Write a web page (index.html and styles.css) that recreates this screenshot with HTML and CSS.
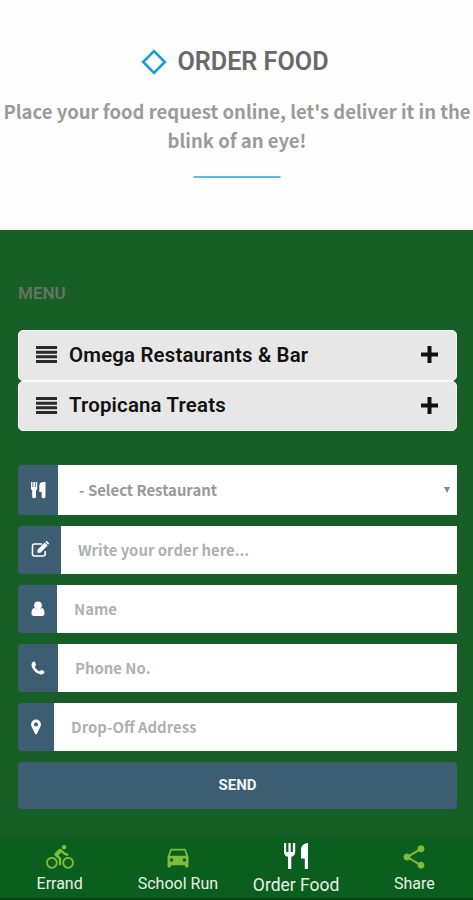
FILE: index.html
```html
<!DOCTYPE html>
<html lang="en">
<head>
    <meta charset="UTF-8">
    <meta name="viewport" content="width=device-width, initial-scale=1">
    <title>Order Food</title>
    <link rel="stylesheet" href="styles.css">
</head>
<body>
    <!-- Page heading -->
    <header class="intro">
        <h1>
            <svg class="diamond" viewBox="0 0 24 24"><path d="M12 2l10 10-10 10L2 12z"/></svg>
            <span>ORDER FOOD</span>
        </h1>
        <p><span class="line">Place your food request online, let's deliver it in the</span> <span class="line">blink of an eye!</span></p>
        <div class="divider"></div>
    </header>

    <main class="order">
        <h2>MENU</h2>

        <!-- Restaurant menus -->
        <div class="accordion">
            <div class="panel">
                <svg class="bars" viewBox="0 0 21 17"><path d="M0 1.5h21M0 6.2h21M0 10.8h21M0 15.5h21"/></svg>
                <span>Omega Restaurants &amp; Bar</span>
                <svg class="plus" viewBox="0 0 17 17"><path d="M8.5 0v17M0 8.5h17"/></svg>
            </div>
            <div class="panel">
                <svg class="bars" viewBox="0 0 21 17"><path d="M0 1.5h21M0 6.2h21M0 10.8h21M0 15.5h21"/></svg>
                <span>Tropicana Treats</span>
                <svg class="plus" viewBox="0 0 17 17"><path d="M8.5 0v17M0 8.5h17"/></svg>
            </div>
        </div>

        <!-- Order form -->
        <form id="order-form">
            <div class="field field-select">
                <span class="addon"><svg viewBox="0 0 15 18"><path d="M0 1h1.500v5h.8V1h1.600v5h.8V1h1.500v6.200q0 1.600-1.200 2.300v6.300q0 1.500-1.900 1.500t-1.900-1.500V9.500Q0 8.800 0 7.200zM14.500 1v14.800q0 1.500-1.900 1.500t-1.900-1.500V11H8.300V5q0-4 4-4z"/></svg></span>
                <select name="restaurant">
                    <option>- Select Restaurant</option>
                    <option>Omega Restaurants &amp; Bar</option>
                    <option>Tropicana Treats</option>
                </select>
                <span class="arrow"></span>
            </div>
            <div class="field field-order">
                <span class="addon"><svg viewBox="0 0 18 18"><path class="outline" d="M14.200 10v3q0 2-2 2H3.500q-2 0-2-2V5q0-2 2-2H11"/><path d="M6.500 8.800l7.200-7.200 3 3-7.200 7.200h-3zM14.400.9l.6-.6q.6-.5 1.200 0l1.600 1.600q.5.600 0 1.200l-.6.600z"/></svg></span>
                <input type="text" name="order" placeholder="Write your order here...">
            </div>
            <div class="field field-name">
                <span class="addon"><svg viewBox="0 0 14 16"><circle cx="7" cy="4.300" r="3.900"/><path d="M3.100 6.900Q5 8.300 7 8.300t3.900-1.400Q13.500 7.500 13.500 12.300 13.500 15 11 15H3Q.5 15 .5 12.300.5 7.500 3.100 6.900z"/></svg></span>
                <input type="text" name="name" placeholder="Name">
            </div>
            <div class="field field-phone">
                <span class="addon"><svg viewBox="0 0 14 14"><path d="M13.500 10.400q0 1.200-.7 2.100-1.200 1.200-3.100 1Q6.400 13 3.600 10.200.8 7.500.5 4.200.300 2.300 1.700 1q.9-.6 1.900-.5l1.500 3.100q.1.500-.5 1L3.700 5.600q.7 1.800 2 3t2.900 1.800l1.200-1.200q.4-.4.900-.2z"/></svg></span>
                <input type="text" name="phone" placeholder="Phone No.">
            </div>
            <div class="field field-address">
                <span class="addon"><svg viewBox="0 0 10 15"><path fill-rule="evenodd" d="M5 .5a4.600 4.600 0 0 1 4.600 4.600q0 1-.5 2.200l-3.200 6.500q-.9 1.300-1.800 0L.9 7.300Q.4 6.200.4 5.100A4.600 4.600 0 0 1 5 .5zm0 2.700a1.900 1.900 0 1 0 0 3.800 1.900 1.900 0 0 0 0-3.800z"/></svg></span>
                <input type="text" name="address" placeholder="Drop-Off Address">
            </div>
            <button type="submit">SEND</button>
        </form>
    </main>

    <!-- Bottom navigation -->
    <nav class="tabs">
        <a class="tab">
            <svg viewBox="0 0 24 24"><path d="M15.500 5.500c1.100 0 2-.9 2-2s-.9-2-2-2-2 .9-2 2 .9 2 2 2zM5 12c-2.800 0-5 2.200-5 5s2.200 5 5 5 5-2.200 5-5-2.200-5-5-5zm0 8.500c-1.900 0-3.500-1.600-3.500-3.500s1.600-3.500 3.500-3.500 3.500 1.600 3.500 3.500-1.600 3.500-3.500 3.500zm5.800-10l2.400-2.400.8.8c1.300 1.300 3 2.100 5.100 2.100V9c-1.500 0-2.700-.6-3.600-1.500l-1.900-1.900c-.5-.4-1-.6-1.600-.6s-1.100.2-1.400.6L7.800 8.400c-.4.4-.6.9-.6 1.400 0 .6.2 1.100.6 1.400L11 14v5h2v-6.200l-2.200-2.300zM19 12c-2.800 0-5 2.200-5 5s2.200 5 5 5 5-2.200 5-5-2.200-5-5-5zm0 8.500c-1.900 0-3.500-1.600-3.500-3.500s1.600-3.500 3.500-3.500 3.500 1.600 3.500 3.500-1.600 3.500-3.500 3.500z"/></svg>
            <span>Errand</span>
        </a>
        <a class="tab">
            <svg viewBox="0 0 24 24"><path fill-rule="evenodd" d="M18.920 6.010C18.720 5.420 18.160 5 17.500 5h-11c-.66 0-1.210.42-1.420 1.010L3 12v8c0 .55.45 1 1 1h1c.55 0 1-.45 1-1v-1h12v1c0 .55.45 1 1 1h1c.55 0 1-.45 1-1v-8zM6.500 16a1.500 1.500 0 1 1 0-3 1.500 1.500 0 0 1 0 3zm11 0a1.500 1.500 0 1 1 0-3 1.500 1.500 0 0 1 0 3zM5 11l1.500-4.500h11L19 11z"/></svg>
            <span>School Run</span>
        </a>
        <a class="tab active">
            <svg viewBox="0 0 24 26"><path d="M0 0h2.200v9h2.200V0h2.300v9h2.200V0h2.300v9c0 2.600-1.500 4.300-3.900 4.700V26H4V13.700C1.500 13.300 0 11.600 0 9zM24 0v26h-3.200V15.500H17V6.500C17 3 20 0 24 0z"/></svg>
            <span>Order Food</span>
        </a>
        <a class="tab">
            <svg viewBox="0 0 24 24"><path d="M18 16.080c-.76 0-1.440.3-1.960.77L8.910 12.700c.05-.23.09-.46.09-.7s-.04-.47-.09-.7l7.050-4.110c.54.5 1.250.81 2.040.81 1.660 0 3-1.340 3-3s-1.340-3-3-3-3 1.340-3 3c0 .24.04.47.09.7L8.040 9.810C7.500 9.310 6.790 9 6 9c-1.660 0-3 1.340-3 3s1.340 3 3 3c.79 0 1.500-.31 2.040-.81l7.120 4.160c-.05.21-.08.43-.08.65 0 1.610 1.310 2.920 2.920 2.920s2.920-1.310 2.920-2.920-1.310-2.920-2.920-2.920z"/></svg>
            <span>Share</span>
        </a>
    </nav>
</body>
</html>
```
FILE: styles.css
```css
* {
    box-sizing: border-box;
}

body {
    margin: 0;
    height: 900px;
    display: flex;
    flex-direction: column;
    overflow: hidden;
    background: #fefefe;
    font-family: Roboto, sans-serif;
}

/* Heading */
.intro {
    height: 230px;
    flex: none;
    padding-top: 46px;
    text-align: center;
}

h1 {
    display: flex;
    align-items: center;
    justify-content: center;
    gap: 10px;
    margin: 0 3px 0 0;
    font-size: 25.2px;
    line-height: 32px;
    font-weight: 600;
    color: #696969;
}

.diamond {
    width: 26px;
    height: 26px;
    fill: none;
    stroke: #159fd3;
    stroke-width: 2.4;
}

.intro p {
    margin: 19px 0 0;
    padding-left: 1px;
    font-family: "Noto Sans CJK SC", sans-serif;
    font-size: 18.5px;
    font-weight: 700;
    line-height: 29px;
    color: #9b9b9b;
}

.line {
    display: block;
    white-space: nowrap;
}

.divider {
    width: 87px;
    height: 2px;
    margin: 21px auto 0;
    background: #64b9df;
    transform: translateX(.5px);
}

/* Green block with the form */
.order {
    height: 607px;
    flex: none;
    padding: 53px 16px 0 18px;
    background: #185f27;
}

h2 {
    margin: 0 0 27px;
    font-size: 17px;
    line-height: 20px;
    font-weight: 600;
    color: #66755f;
}

.accordion {
    margin-bottom: 34px;
}

.panel {
    display: flex;
    align-items: center;
    height: 51px;
    padding: 0 18px 2px 17px;
    border: 1px solid #fafafa;
    border-radius: 5px;
    background: #e7e7e7;
    font-size: 20.4px;
    font-weight: 600;
    letter-spacing: .18px;
    color: #111;
}

.panel + .panel {
    height: 50px;
}

.bars {
    width: 21px;
    height: 17px;
    margin-right: 12px;
    stroke: #2a2a2a;
    stroke-width: 3;
}

.plus {
    width: 17px;
    height: 17px;
    margin-left: auto;
    stroke: #111;
    stroke-width: 4;
}

/* Form rows */
.field {
    position: relative;
    display: flex;
    height: 48px;
    margin-bottom: 11px;
}

.field-select {
    height: 50px;
}

.addon {
    display: flex;
    align-items: center;
    justify-content: center;
    flex: none;
    width: 40px;
    border-radius: 4px 0 0 4px;
    background: #3d5d73;
}

.addon svg {
    width: 14px;
    height: 16px;
    fill: #fff;
}

.addon .outline {
    fill: none;
    stroke: #fff;
    stroke-width: 1.6;
}

.field-order .addon {
    width: 43px;
}

.field-name .addon {
    width: 39px;
}

.field-address .addon {
    width: 36px;
}

.addon + input {
    padding-bottom: 2px;
}

.field-select svg {
    width: 15px;
    height: 18px;
}

.field-order svg {
    width: 18px;
    height: 18px;
}

input,
select {
    flex: 1;
    min-width: 0;
    margin: 0;
    padding: 0 17px;
    border: 0;
    border-radius: 0;
    background: #fff;
    font-family: "Noto Sans CJK SC", sans-serif;
    font-size: 14.9px;
    font-weight: 700;
    color: #999;
}

select {
    padding-left: 21px;
    padding-bottom: 1px;
    appearance: none;
}

input::placeholder {
    color: #b0b0b0;
}

.arrow {
    position: absolute;
    right: 7px;
    top: 22px;
    border: 3px solid transparent;
    border-top: 6px solid #888;
    border-bottom: 0;
}

button {
    width: 100%;
    height: 47px;
    padding: 0 6px 2px;
    border: 0;
    border-radius: 4px;
    background: #3d5d73;
    font-family: Roboto, sans-serif;
    font-size: 15px;
    font-weight: 700;
    color: #f1f5f8;
}

/* Bottom navigation */
.tabs {
    display: grid;
    grid-template-columns: repeat(4, 1fr);
    height: 63px;
    flex: none;
    border-bottom: 2px solid #07431a;
    background: #0a5e1e;
}

.tab {
    display: flex;
    flex-direction: column;
    align-items: center;
    padding-top: 6px;
    padding-left: 1px;
    font-size: 16px;
    line-height: 20px;
    white-space: nowrap;
    color: #e9f1e6;
}

.tab svg {
    width: 28px;
    height: 28px;
    margin-bottom: 3px;
    fill: #7dbd3a;
}

.tab.active {
    font-size: 17.5px;
}

.tab.active svg {
    width: 24px;
    height: 26px;
    margin-bottom: 6px;
    fill: #fff;
}
```
